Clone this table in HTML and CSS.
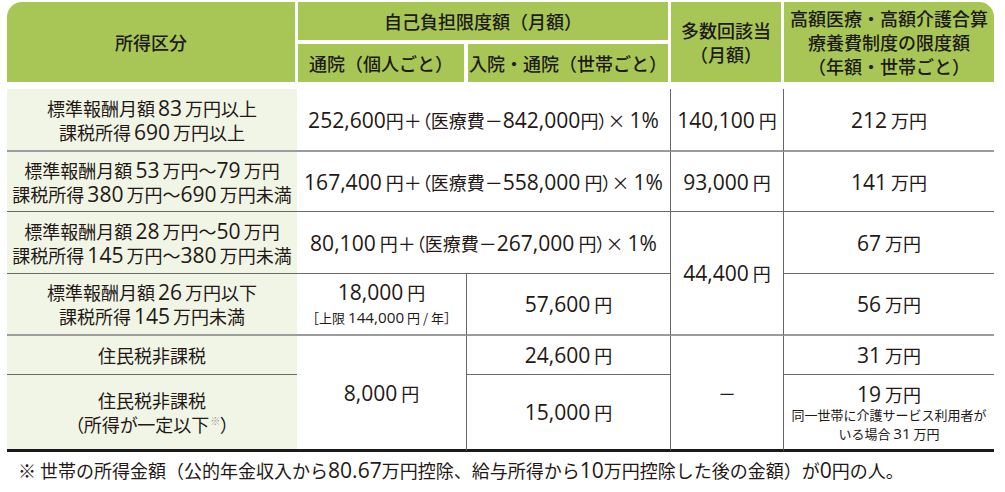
FILE: index.html
```html
<!DOCTYPE html>
<html lang="ja">
<head>
<meta charset="utf-8">
<title>高額療養費の自己負担限度額</title>
<link rel="stylesheet" href="styles.css">
</head>
<body>
<div class="wrap">
  <table class="limits">
    <colgroup>
      <col class="c1"><col class="c2"><col class="c3"><col class="c4"><col class="c5">
    </colgroup>
    <thead>
      <tr class="hr1">
        <th rowspan="2" class="h-first">所得区分</th>
        <th colspan="2" class="h-group">自己負担限度額（月額）</th>
        <th rowspan="2" class="h-tall">多数回該当<br>（月額）</th>
        <th rowspan="2" class="h-last">高額医療・高額介護合算<br>療養費制度の限度額<br>（年額・世帯ごと）</th>
      </tr>
      <tr class="hr2">
        <th class="h-sub">通院（個人ごと）</th>
        <th class="h-sub h-sub2">入院・通院（世帯ごと）</th>
      </tr>
    </thead>
    <tbody>
      <tr class="r1">
        <td class="lab b2">標準報酬月額 <span class="n">83</span> 万円以上<br>課税所得 <span class="n">690</span> 万円以上</td>
        <td colspan="2" class="f b2"><span class="n">252,600</span>円＋（医療費－<span class="n">842,000</span>円）× <span class="n">1%</span></td>
        <td class="vl b2"><span class="n">140,100</span> 円</td>
        <td class="vl b2"><span class="n">212</span> 万円</td>
      </tr>
      <tr class="r2">
        <td class="lab b1">標準報酬月額 <span class="n">53</span> 万円～<span class="n">79</span> 万円<br>課税所得 <span class="n">380</span> 万円～<span class="n">690</span> 万円未満</td>
        <td colspan="2" class="f b1"><span class="n">167,400</span> 円＋（医療費－<span class="n">558,000</span> 円）× <span class="n">1%</span></td>
        <td class="vl b1"><span class="n">93,000</span> 円</td>
        <td class="vl b1"><span class="n">141</span> 万円</td>
      </tr>
      <tr class="r3">
        <td class="lab b1">標準報酬月額 <span class="n">28</span> 万円～<span class="n">50</span> 万円<br>課税所得 <span class="n">145</span> 万円～<span class="n">380</span> 万円未満</td>
        <td colspan="2" class="f b1"><span class="n">80,100</span> 円＋（医療費－<span class="n">267,000</span> 円）× <span class="n">1%</span></td>
        <td rowspan="2" class="vl b2"><span class="n">44,400</span> 円</td>
        <td class="vl b1"><span class="n">67</span> 万円</td>
      </tr>
      <tr class="r4">
        <td class="lab b2">標準報酬月額 <span class="n">26</span> 万円以下<br>課税所得 <span class="n">145</span> 万円未満</td>
        <td class="b2"><span class="n">18,000</span> 円<span class="small cap">［上限 <span class="n">144,000</span> 円 / 年］</span></td>
        <td class="vl b2"><span class="n">57,600</span> 円</td>
        <td class="vl b2"><span class="n">56</span> 万円</td>
      </tr>
      <tr class="r5">
        <td class="lab b1">住民税非課税</td>
        <td rowspan="2" class="b3"><span class="n">8,000</span> 円</td>
        <td class="vl b1"><span class="n">24,600</span> 円</td>
        <td rowspan="2" class="vl b3 dash">－</td>
        <td class="vl b1"><span class="n">31</span> 万円</td>
      </tr>
      <tr class="r6">
        <td class="lab b3">住民税非課税<br>（所得が一定以下<sup class="mark">※</sup>）</td>
        <td class="vl b3"><span class="n">15,000</span> 円</td>
        <td class="vl b3"><span class="n">19</span> 万円<span class="small note">同一世帯に介護サービス利用者が<br>いる場合 <span class="n">31</span> 万円</span></td>
      </tr>
    </tbody>
  </table>
  <p class="foot">※ 世帯の所得金額（公的年金収入から<span class="n">80.67</span>万円控除、給与所得から<span class="n">10</span>万円控除した後の金額）が<span class="n">0</span>円の人。</p>
</div>
</body>
</html>
```

FILE: styles.css
```css
* {
  box-sizing: border-box;
}

body {
  margin: 0;
  background: #ffffff;
  color: #231815;
  font-family: "Noto Sans CJK JP", sans-serif;
}

.wrap {
  padding: 2px 0 0 7px;
}

.limits {
  width: 987px;
  table-layout: fixed;
  border-collapse: separate;
  border-spacing: 0;
  font-size: 18px;
  line-height: 24px;
}

.c1 { width: 290px; }
.c2 { width: 169px; }
.c3 { width: 204px; }
.c4 { width: 113px; }
.c5 { width: 211px; }

.n {
  font-family: "Open Sans", sans-serif;
  font-size: 1.17em;
}

/* header */
.limits th {
  background: #a8c656;
  color: #1e1a17;
  font-weight: 500;
  padding: 0;
  text-align: center;
  vertical-align: middle;
  border-left: 1px solid #ffffff;
  border-right: 2px solid #ffffff;
  border-bottom: 7px solid #ffffff;
}

.h-first {
  border-left: 0 !important;
  border-top-left-radius: 15px;
}

.h-last {
  border-right: 0 !important;
  border-top-right-radius: 15px;
}

.hr1 .h-group {
  height: 42px;
  border-bottom-width: 4px;
}

.hr2 .h-sub {
  height: 45px;
}

.h-sub2 {
  border-left-width: 2px !important;
}

/* body */
.limits td {
  padding: 0;
  text-align: center;
  vertical-align: middle;
}

.lab {
  background: #f1f5e6;
  font-feature-settings: "palt";
  word-spacing: -1px;
}

.f {
  font-feature-settings: "palt";
}

.vl {
  border-left: 1px solid #666666;
}

.b1 { border-bottom: 1px solid #6a6a6a; }
.b2 { border-bottom: 2px solid #9c9c9c; }
.b3 { border-bottom: 3px solid #1a1a1a; }

.r1 { height: 63px; }
.r2 { height: 60px; }
.r3 { height: 62px; }
.r4 { height: 62px; }
.r5 { height: 39px; }
.r6 { height: 77px; }

.small {
  display: block;
  font-size: 13px;
}

.cap {
  line-height: 20px;
  margin-top: 3px;
}

.note {
  line-height: 18px;
}

.mark {
  font-size: 10px;
  color: #9a9a9a;
  vertical-align: 7px;
  line-height: 0;
  margin-left: 1px;
}

.dash {
  font-size: 18px;
}

.foot {
  margin: 6px 0 0 11px;
  font-size: 18px;
  line-height: 24px;
}
```
